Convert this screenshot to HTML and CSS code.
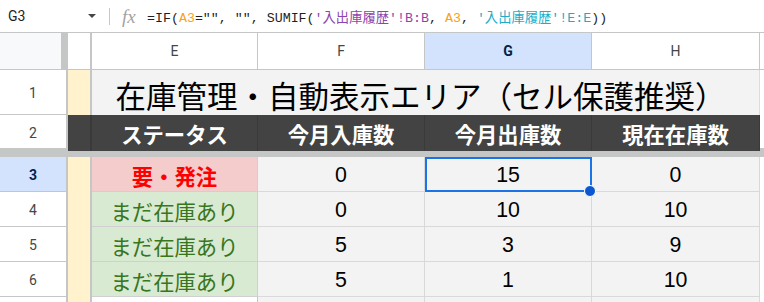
FILE: index.html
```html
<!DOCTYPE html>
<html lang="ja">
<head>
  <meta charset="UTF-8" />
  <meta name="viewport" content="width=device-width, initial-scale=1.0"/>
  <title>在庫管理</title>
  <link rel="stylesheet" href="styles.css">
</head>
<body>

  <!-- Formula bar -->
  <div class="formula-bar">
    <div class="name-box">G3</div>
    <div class="name-arrow"></div>
    <div class="bar-sep"></div>
    <div class="fx">fx</div>
    <div class="formula">=IF(<span class="ref-a">A3</span>="", "", SUMIF(<span class="ref-b">'入出庫履歴'!B:B</span>, <span class="ref-a">A3</span>, <span class="ref-c">'入出庫履歴'!E:E</span>))</div>
  </div>

  <div class="sheet">
    <!-- Column headers -->
    <div class="row row-head">
      <div class="cell corner"></div>
      <div class="cell col-d colhead"></div>
      <div class="cell col-e colhead">E</div>
      <div class="cell col-f colhead">F</div>
      <div class="cell col-g colhead selected">G</div>
      <div class="cell col-h colhead">H</div>
      <div class="cell col-x colhead"></div>
    </div>

    <!-- Row 1: title -->
    <div class="row row-title">
      <div class="cell rh">1</div>
      <div class="cell col-d memo"></div>
      <div class="cell title">在庫管理・自動表示エリア（セル保護推奨）</div>
      <div class="cell col-x"></div>
    </div>

    <!-- Row 2: labels -->
    <div class="row row-labels">
      <div class="cell rh rh-last">2</div>
      <div class="cell col-d label"></div>
      <div class="cell col-e label">ステータス</div>
      <div class="cell col-f label">今月入庫数</div>
      <div class="cell col-g label">今月出庫数</div>
      <div class="cell col-h label">現在在庫数</div>
      <div class="cell col-x"></div>
    </div>

    <div class="freeze"></div>

    <div id="rows"></div>

    <div class="row row-tail">
      <div class="cell rh"></div>
      <div class="cell col-d memo"></div>
      <div class="cell col-e"></div>
      <div class="cell col-f num"></div>
      <div class="cell col-g num"></div>
      <div class="cell col-h num"></div>
      <div class="cell col-x"></div>
    </div>
  </div>

  <script>
    // stock rows (row 3 onward)
    const stock = [
      { row: 3, inQty: 0, outQty: 15, left: 0 },
      { row: 4, inQty: 0, outQty: 10, left: 10 },
      { row: 5, inQty: 5, outQty: 3, left: 9 },
      { row: 6, inQty: 5, outQty: 1, left: 10 },
    ];

    const rows = document.getElementById("rows");

    stock.forEach(s => {
      const order = s.left <= 0;
      const div = document.createElement("div");
      div.className = "row row-data";
      div.innerHTML = `
        <div class="cell rh ${s.row === 3 ? "selected" : ""}">${s.row}</div>
        <div class="cell col-d memo"></div>
        <div class="cell col-e status ${order ? "status-order" : "status-ok"}">${order ? "要・発注" : "まだ在庫あり"}</div>
        <div class="cell col-f num">${s.inQty}</div>
        <div class="cell col-g num">${s.outQty}${s.row === 3 ? '<span class="sel-box"></span><span class="sel-dot"></span>' : ""}</div>
        <div class="cell col-h num">${s.left}</div>
        <div class="cell col-x"></div>`;
      rows.appendChild(div);
    });
  </script>
</body>
</html>
```

FILE: styles.css
```css
body { margin: 0; width: 764px; height: 302px; overflow: hidden; background: #fff; font-family: Roboto, "Noto Sans CJK JP", sans-serif; }

/* Formula bar */
.formula-bar { display: flex; align-items: center; height: 33px; box-sizing: border-box; border-bottom: 1px solid #c4c7c5; }
.name-box { width: 80px; padding-left: 8px; font-size: 14px; color: #1f1f1f; }
.name-arrow { width: 0; height: 0; border-left: 4px solid transparent; border-right: 4px solid transparent; border-top: 4px solid #444746; }
.bar-sep { width: 1px; height: 17px; background: #c4c7c5; margin-left: 13px; }
.fx { margin-left: 12px; width: 15px; font-family: "Liberation Serif", serif; font-style: italic; font-size: 19px; color: #a3a3a3; line-height: 1; }
.formula { margin-left: 10px; font-family: "Liberation Mono", "Noto Sans CJK JP", monospace; font-size: 13.3px; color: #1f1f1f; white-space: nowrap; }
.ref-a { color: #f7a21b; }
.ref-b { color: #8e44ad; }
.ref-c { color: #1aaec8; }

/* Grid */
.row { display: flex; }
.cell { box-sizing: border-box; display: flex; align-items: center; justify-content: center; white-space: nowrap; }
.col-d { width: 24px; border-right: 2px solid #c4c7c5; }
.col-e { width: 166px; border-right: 1px solid #c4c7c5; }
.col-f { width: 167px; border-right: 1px solid #c4c7c5; }
.col-g { width: 167px; border-right: 1px solid #c4c7c5; position: relative; }
.col-h { width: 168px; border-right: 1px solid #c4c7c5; }
.col-x { flex: 1; }

.row-head { height: 37px; }
.corner { width: 68px; background: #f8f9fa; border-right: 7px solid #c4c7c5; border-bottom: 1px solid #c4c7c5; }
.colhead { border-bottom: 1px solid #c4c7c5; font-size: 14px; color: #444746; }
.colhead.selected { background: #d3e3fd; color: #041e49; font-weight: 700; }

.rh { width: 68px; border-right: 2px solid #c4c7c5; border-bottom: 1px solid #c4c7c5; font-size: 14px; color: #444746; padding-top: 2px; }
.rh.selected { background: #d3e3fd; color: #041e49; font-weight: 700; }
.rh-last { border-bottom: 3px solid #c4c7c5; }

.memo { background: #fff2cc; }

.row-title { height: 45px; }
.title { width: 668px; background: #f3f3f3; border-right: 1px solid #dcdcdc; font-size: 30.5px; color: #000; padding: 4px 10px 0 0; }

.row-labels { height: 36px; }
.label { background: #434343; border-right-color: #3a3a3a; color: #fff; font-weight: 700; font-size: 21.33px; }
.row-labels .col-x { border-bottom: 3px solid #c4c7c5; }

.freeze { height: 6px; background: #c4c7c5; }

.row-data { height: 35px; }
.row-tail { height: 6px; }
.status { font-size: 21.33px; border-bottom: 1px solid #d0d0d0; border-right-color: #d0d0d0; padding-top: 2px; }
.status-order { background: #f4cccc; color: #ff0000; font-weight: 700; }
.status-ok { background: #d9ead3; color: #38761d; }
.num { background: #f3f3f3; border-right-color: #d9d9d9; border-bottom: 1px solid #d9d9d9; font-family: "Liberation Sans", Arial, sans-serif; font-size: 21.33px; color: #000; padding-top: 2px; }
.row-tail .num { border-bottom: none; }

/* Selection on G3 */
.sel-box { position: absolute; left: 0; top: 0; width: 167px; height: 35px; box-sizing: border-box; border: 2px solid #1a73e8; }
.sel-dot { position: absolute; right: -5px; bottom: -6px; width: 10px; height: 10px; border-radius: 50%; background: #0b57d0; border: 1px solid #fff; z-index: 2; }
```
